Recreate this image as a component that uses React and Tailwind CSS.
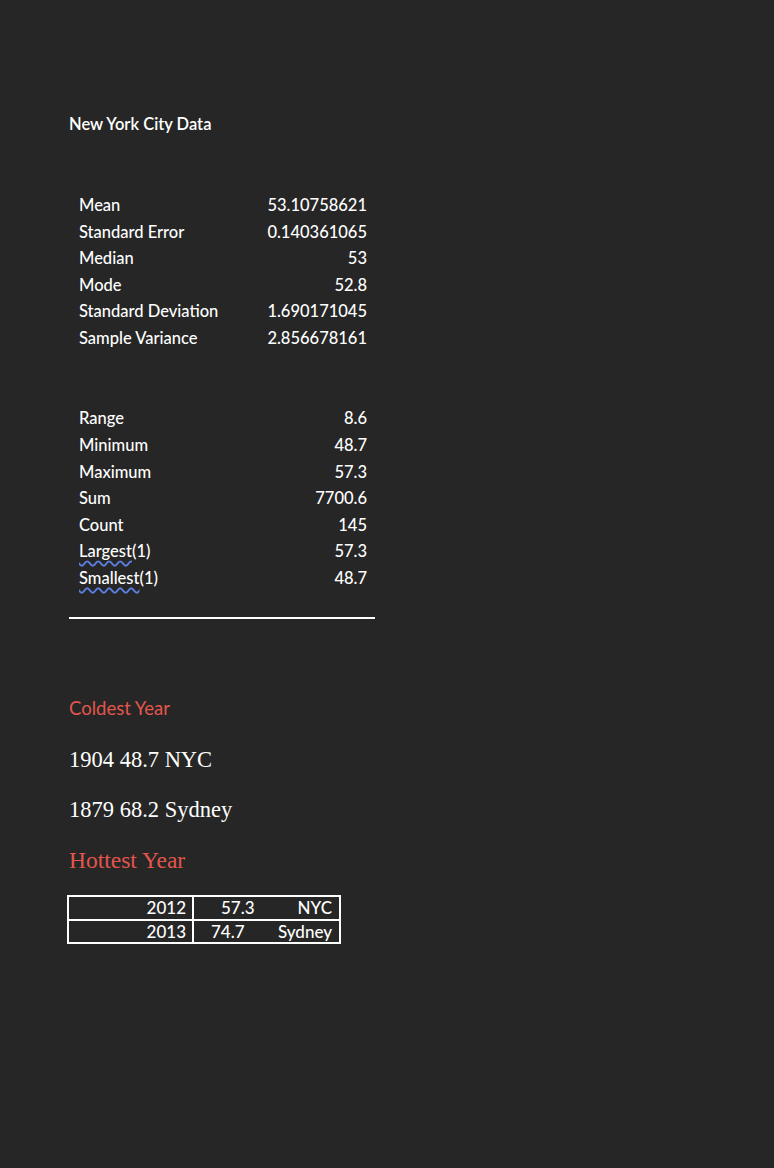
import React from "react";

const groupOne = [
  ["Mean", "53.10758621"],
  ["Standard Error", "0.140361065"],
  ["Median", "53"],
  ["Mode", "52.8"],
  ["Standard Deviation", "1.690171045"],
  ["Sample Variance", "2.856678161"],
];

const groupTwo = [
  ["Range", "8.6"],
  ["Minimum", "48.7"],
  ["Maximum", "57.3"],
  ["Sum", "7700.6"],
  ["Count", "145"],
  ["Largest(1)", "57.3", "Largest"],
  ["Smallest(1)", "48.7", "Smallest"],
];

const StatRow = ({ label, value, squiggle }) => (
  <div className="flex h-[26.6px] items-center justify-between">
    <span>
      {squiggle ? (
        <>
          <span className="underline decoration-wavy decoration-[#5b7fe0] decoration-[1.5px] underline-offset-[3px]">
            {squiggle}
          </span>
          {label.slice(squiggle.length)}
        </>
      ) : (
        label
      )}
    </span>
    <span>{value}</span>
  </div>
);

export default function App() {
  return (
    <div className="min-h-[1168px] w-full bg-[#262626] pl-[69px] pt-[114px] text-white font-['Lato',sans-serif]">
      <h1 className="h-5 text-[16.5px] leading-5 font-semibold">New York City Data</h1>

      {/* summary stats */}
      <div className="mt-[58px] w-[307px] pl-[10px] pr-[9px] text-[16.5px] font-medium">
        {groupOne.map(([label, value]) => (
          <StatRow key={label} label={label} value={value} />
        ))}
        <div className="h-[54px]" />
        {groupTwo.map(([label, value, squiggle]) => (
          <StatRow key={label} label={label} value={value} squiggle={squiggle} />
        ))}
      </div>
      <div className="mt-[25px] h-[2px] w-[306px] bg-white" />

      <h2 className="mt-[77px] h-6 text-[18.5px] leading-6 text-[#e2564c]">Coldest Year</h2>
      <div className="mt-[15px] font-['Liberation_Serif',serif] text-[22.5px]">
        <p className="leading-[50px]">1904 48.7 NYC</p>
        <p className="leading-[50px]">1879 68.2 Sydney</p>
        <p className="text-[23.5px] leading-[50px] text-[#e2564c]">Hottest Year</p>
      </div>

      {/* hottest table */}
      <div className="-ml-0.5 mt-[10px] w-[274px] border-2 border-white text-[17px] font-medium">
        {[
          ["2012", "57.3", "NYC", "pl-[27px]"],
          ["2013", "74.7", "Sydney", "pl-[17px]"],
        ].map(([year, temp, city, pad], i) => (
          <div key={year} className={`flex h-[22.5px] items-center leading-none ${i > 0 ? "border-t-2 border-white" : ""}`}>
            <div className="flex h-full w-[125px] items-center justify-end border-r-2 border-white pr-[6px]">{year}</div>
            <div className="flex flex-1 items-center justify-between pr-[7px]">
              <span className={pad}>{temp}</span>
              <span>{city}</span>
            </div>
          </div>
        ))}
      </div>
    </div>
  );
}
